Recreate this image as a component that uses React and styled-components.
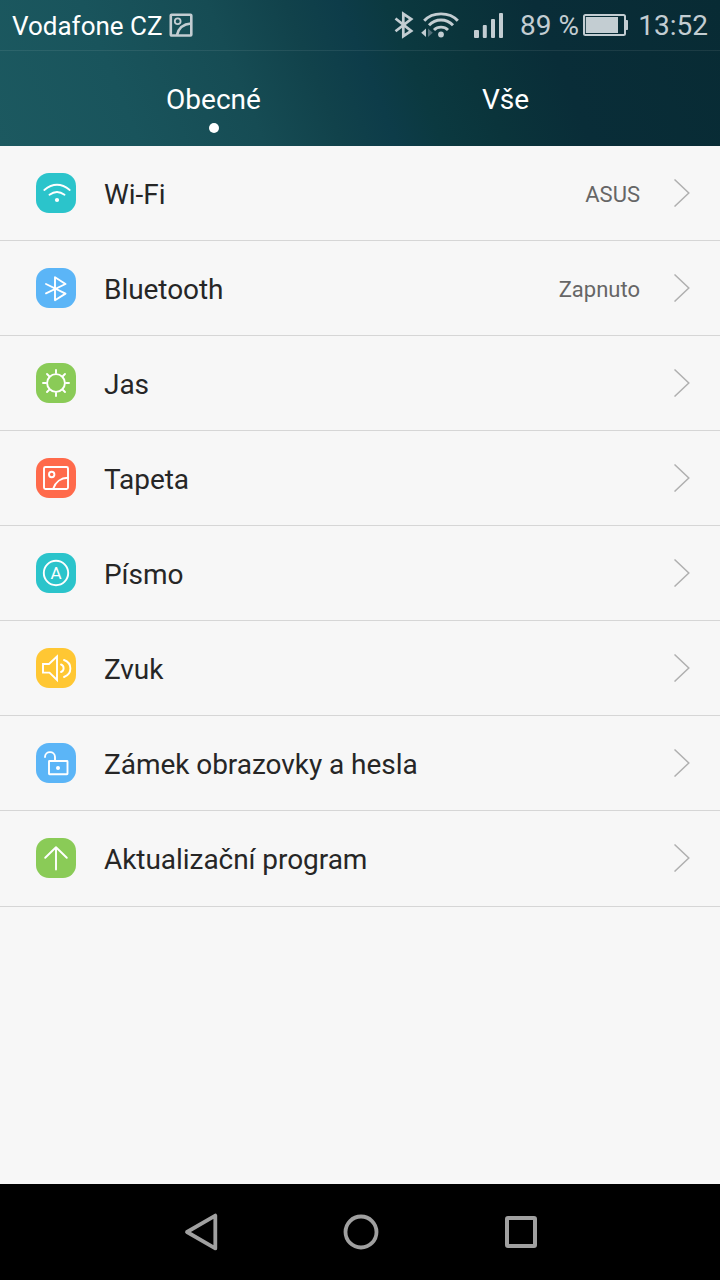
import styled, { createGlobalStyle } from 'styled-components';

const GlobalStyle = createGlobalStyle`
  * {
    box-sizing: border-box;
  }
  body {
    margin: 0;
    font-family: Roboto, "Noto Sans", sans-serif;
    background: #f7f7f7;
  }
  svg {
    display: block;
    flex: none;
  }
`;

const Screen = styled.div`
  display: flex;
  flex-direction: column;
  width: 720px;
  height: 1280px;
  background: #f7f7f7;
  overflow: hidden;
`;

const Header = styled.header`
  display: flex;
  flex-direction: column;
  height: 146px;
  background: linear-gradient(
    68deg,
    #1c5960 0%,
    #19545c 18%,
    #164c54 34%,
    #11424b 44%,
    #0d3c49 51%,
    #0b3940 57%,
    #0a343b 65%,
    #092d38 76%,
    #082b34 100%
  );
`;

const StatusBar = styled.div`
  display: flex;
  justify-content: space-between;
  height: 51px;
  padding: 0 12px;
  border-bottom: 1px solid rgba(255, 255, 255, 0.08);
  color: #c3cdd2;
`;

const StatusGroup = styled.div`
  display: flex;
  align-items: center;
  gap: ${({ $gap }) => $gap || 0};
`;

const Carrier = styled.span`
  padding-top: 2px;
  font-size: 26px;
  line-height: 30px;
  color: #ffffff;
`;

const StatusText = styled.span`
  width: ${({ $width }) => $width};
  margin-left: ${({ $left }) => $left};
  padding-top: 2px;
  font-size: 28px;
  line-height: 30px;
  text-align: right;
  white-space: nowrap;
`;

const StatusIcon = styled.svg`
  margin-left: ${({ $left }) => $left || 0};
`;

const Tabs = styled.nav`
  display: flex;
  flex: 1;
  padding-left: 67.5px;
`;

const Tab = styled.div`
  display: flex;
  flex-direction: column;
  align-items: center;
  width: 292px;
  padding-top: 32px;
  font-size: 28px;
  line-height: 33px;
  color: #ffffff;
`;

const TabDot = styled.span`
  width: 10px;
  height: 10px;
  margin-top: 7px;
  border-radius: 50%;
  background: #ffffff;
`;

const List = styled.ul`
  flex: 1;
  margin: 0;
  padding: 0;
  list-style: none;
`;

const Row = styled.li`
  display: flex;
  align-items: center;
  height: 95px;
  padding: 0 30px 0 36px;
  border-bottom: 1px solid #d6d6d6;

  &:last-child {
    height: 96px;
    padding-bottom: 1px;
  }
`;

const Badge = styled.div`
  width: 40px;
  height: 40px;
  border-radius: 13px;
  background: ${({ $color }) => $color};
`;

const Label = styled.span`
  flex: 1;
  margin-left: 28px;
  padding-top: 4px;
  font-size: 28px;
  line-height: 34px;
  letter-spacing: -0.05px;
  color: #262626;
`;

const Value = styled.span`
  margin-right: 34px;
  padding-top: 4px;
  font-size: 22px;
  line-height: 26px;
  color: #666666;
`;

const NavBar = styled.footer`
  display: flex;
  justify-content: center;
  height: 96px;
  padding-left: 2px;
  background: #000000;
`;

const NavButton = styled.button`
  display: flex;
  align-items: center;
  justify-content: center;
  width: 160px;
  padding: 0;
  border: 0;
  background: none;
`;

const Glyph = ({ children }) => (
  <svg
    width="40"
    height="40"
    viewBox="0 0 40 40"
    fill="none"
    stroke="#fff"
    strokeWidth="1.9"
    strokeLinecap="round"
    strokeLinejoin="round"
  >
    {children}
  </svg>
);

const items = [
  {
    label: 'Wi-Fi',
    value: 'ASUS',
    color: '#2bc4cb',
    glyph: (
      <>
        <path d="M8.3 17 Q21 6.6 33.7 17" />
        <path d="M13.5 21.7 Q21 16.3 28.5 21.7" />
        <circle cx="21" cy="27" r="2.1" fill="#fff" stroke="none" />
      </>
    ),
  },
  {
    label: 'Bluetooth',
    value: 'Zapnuto',
    color: '#5bb5f7',
    glyph: <path d="M10 16 L29.5 25.6 L19 32.2 V9.2 L29.5 16 L10 25.3" />,
  },
  {
    label: 'Jas',
    color: '#8acb57',
    glyph: (
      <>
        <circle cx="20" cy="20" r="8.9" />
        <path d="M20 7v3M20 30v3M7 20h3M30 20h3M11 11l2 2M27 27l2 2M29 11l-2 2M13 27l-2 2" />
      </>
    ),
  },
  {
    label: 'Tapeta',
    color: '#ff6a4b',
    glyph: (
      <>
        <rect x="8" y="9" width="24" height="22" rx="1.5" />
        <circle cx="15.7" cy="16.5" r="2.7" />
        <path d="M17.3 30.5 C19.5 24 25 19.8 31.8 19.8" />
      </>
    ),
  },
  {
    label: 'Písmo',
    color: '#2bc4cb',
    glyph: (
      <>
        <circle cx="20" cy="20" r="12.2" />
        <text x="20" y="26" textAnchor="middle" fontSize="17" fill="#fff" stroke="none">
          A
        </text>
      </>
    ),
  },
  {
    label: 'Zvuk',
    color: '#ffc733',
    glyph: (
      <>
        <path d="M7 16 H13 L21 8.5 V32 L13.5 24.6 H7 Z" strokeLinejoin="miter" />
        <path d="M25 16.5 A4 4 0 0 1 25 24M28 12 C36.5 15 36.5 26 28 29" />
      </>
    ),
  },
  {
    label: 'Zámek obrazovky a hesla',
    color: '#5bb5f7',
    glyph: (
      <>
        <rect x="13" y="18" width="18.5" height="13.2" rx="0.5" />
        <path d="M9 14 C9 7.5 19 7.5 19 14 V18" />
        <circle cx="22" cy="25" r="2" fill="#fff" stroke="none" />
      </>
    ),
  },
  {
    label: 'Aktualizační program',
    color: '#8acb57',
    glyph: <path d="M20 31.5 V9.2 M9.2 19.8 L20 9.2 L30.8 19.8" />,
  },
];

const Chevron = () => (
  <svg width="16" height="28" viewBox="0 0 16 28" fill="none" stroke="#b0b0b0" strokeWidth="1.5">
    <path d="M0.5 0.5 L14.8 14 L0.5 27.5" />
  </svg>
);

const App = () => (
  <>
    <GlobalStyle />
    <Screen>
      <Header>
        <StatusBar>
          <StatusGroup $gap="6px">
            <Carrier>Vodafone CZ</Carrier>
            <svg width="24" height="24" viewBox="0 0 24 24" fill="none" stroke="#c3cdd2" strokeWidth="2.6">
              <rect x="1.8" y="1.7" width="20.5" height="20.8" rx="0.8" />
              <circle cx="8.7" cy="8.3" r="2.9" strokeWidth="1.8" />
              <path d="M8 22 C9.5 15.5 14.5 11 22 10.5" />
            </svg>
          </StatusGroup>
          <StatusGroup>
            {/* bluetooth */}
            <StatusIcon width="20" height="28" viewBox="0 0 20 28" fill="none" stroke="currentColor" strokeWidth="2.7">
              <path d="M1.5 7.5 L17.2 20 L9.3 25.2 V2.8 L17.2 8 L1.5 20.3" />
            </StatusIcon>
            {/* wifi with traffic arrows */}
            <StatusIcon $left="7px" width="38" height="28" viewBox="0 0 38 28" fill="none" stroke="currentColor" strokeWidth="2.9">
              <path d="M3.2 9.8 C11.5 0.6 28.5 0.6 36.8 9.8" />
              <path d="M8 14.2 C14.5 7.2 25.5 7.2 32 14.2" />
              <path d="M13 19 C16.8 15.2 23.2 15.2 27 19" />
              <circle cx="20" cy="23.5" r="2.9" fill="currentColor" stroke="none" />
              <path d="M0.2 21.8 L5 17.5 V26 Z" fill="currentColor" stroke="none" />
              <path d="M7 17.5 L11.8 21.8 L7 26 Z" fill="#54707a" stroke="none" />
            </StatusIcon>
            {/* signal */}
            <StatusIcon $left="15px" width="30" height="28" viewBox="0 0 30 28" fill="currentColor">
              <rect x="0" y="19" width="5" height="8" rx="1" />
              <rect x="8.8" y="14" width="4" height="13" rx="1" />
              <rect x="17" y="8" width="4" height="19" rx="1" />
              <rect x="25" y="2" width="4" height="25" rx="1" />
            </StatusIcon>
            <StatusText $left="16px" $width="59px">89 %</StatusText>
            {/* battery */}
            <StatusIcon $left="4px" width="46" height="24" viewBox="0 0 46 24">
              <rect x="1" y="2" width="41" height="20" rx="1.5" fill="none" stroke="currentColor" strokeWidth="2" />
              <rect x="2.8" y="4" width="32.2" height="16" fill="currentColor" />
              <path d="M43 7 h1.2 q0.8 0 0.8 0.8 v8.4 q0 0.8 -0.8 0.8 h-1.2 z" fill="currentColor" />
            </StatusIcon>
            <StatusText $left="9px" $width="70px">13:52</StatusText>
          </StatusGroup>
        </StatusBar>
        <Tabs>
          <Tab>
            Obecné
            <TabDot />
          </Tab>
          <Tab>Vše</Tab>
        </Tabs>
      </Header>

      <List>
        {items.map(({ label, value, color, glyph }) => (
          <Row key={label}>
            <Badge $color={color}>
              <Glyph>{glyph}</Glyph>
            </Badge>
            <Label>{label}</Label>
            {value && <Value>{value}</Value>}
            <Chevron />
          </Row>
        ))}
      </List>

      <NavBar>
        <NavButton>
          <svg width="36" height="40" viewBox="0 0 36 40" fill="none" stroke="#a0a0a0" strokeWidth="3.8" strokeLinejoin="round">
            <path d="M4 20 L32.3 3.6 V36.4 Z" />
          </svg>
        </NavButton>
        <NavButton>
          <svg width="36" height="36" viewBox="0 0 36 36" fill="none" stroke="#a0a0a0" strokeWidth="3.8">
            <circle cx="18" cy="18" r="15.5" />
          </svg>
        </NavButton>
        <NavButton>
          <svg width="32" height="32" viewBox="0 0 32 32" fill="none" stroke="#a0a0a0" strokeWidth="4">
            <rect x="2" y="2" width="28" height="28" rx="1" />
          </svg>
        </NavButton>
      </NavBar>
    </Screen>
  </>
);

export default App;
